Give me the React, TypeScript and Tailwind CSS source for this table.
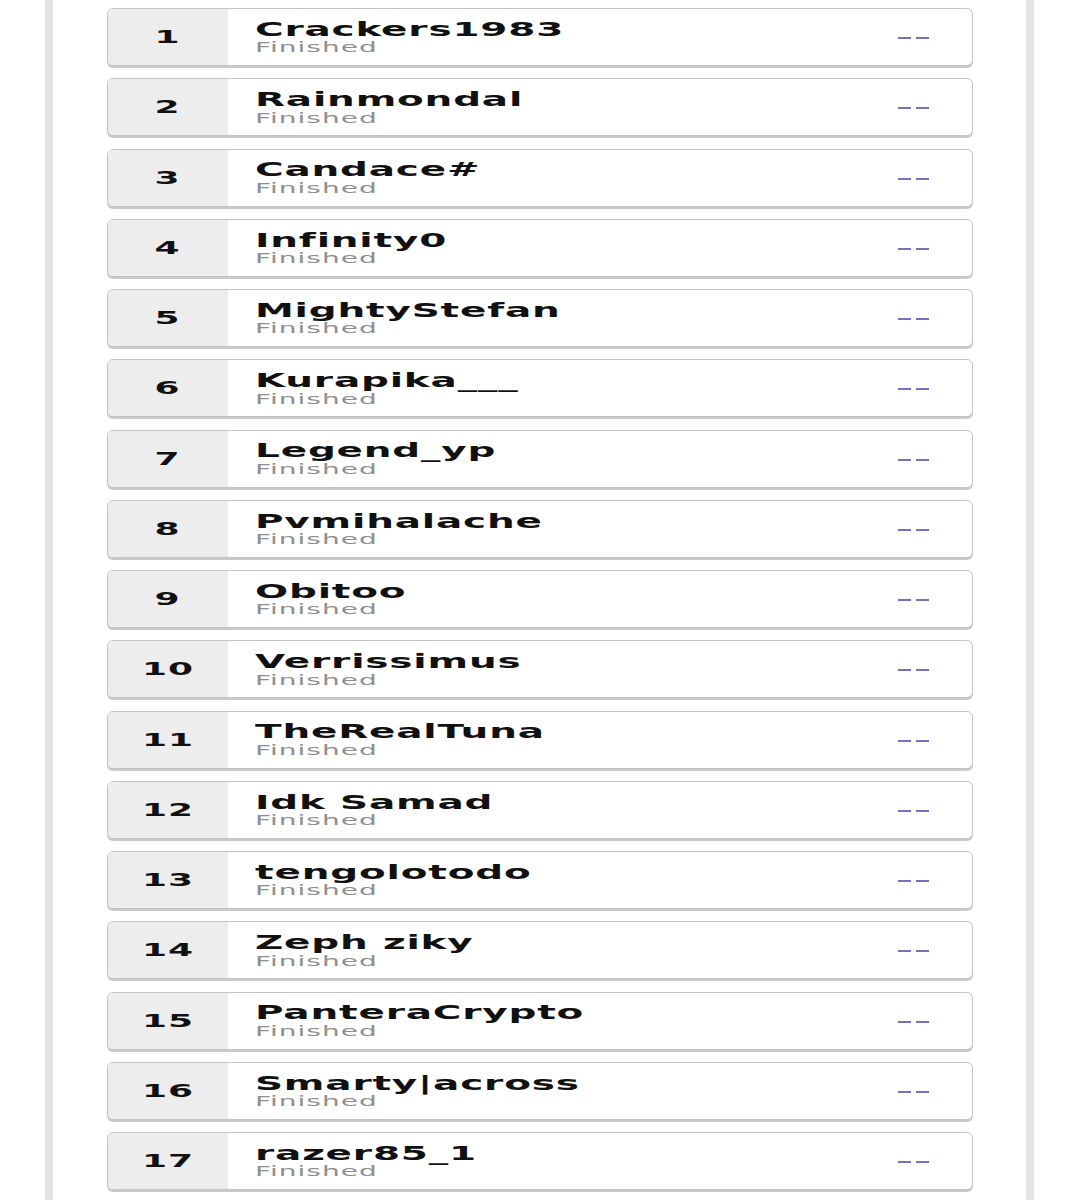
const players = [
  'Crackers1983',
  'Rainmondal',
  'Candace#',
  'Infinity0',
  'MightyStefan',
  'Kurapika___',
  'Legend_yp',
  'Pvmihalache',
  'Obitoo',
  'Verrissimus',
  'TheRealTuna',
  'Idk Samad',
  'tengolotodo',
  'Zeph ziky',
  'PanteraCrypto',
  'Smarty|across',
  'razer85_1',
];

function Row({ rank, name }: { rank: number; name: string }) {
  return (
    <div className="flex h-[58px] shrink-0 overflow-hidden rounded-[6px] border border-[#c4c4c4] bg-white shadow-[0_2px_0_#c9c9c9]">
      {/* Rank */}
      <div className="flex w-[120px] shrink-0 items-center justify-center bg-[#ededed]">
        <span className="inline-block origin-center scale-x-[2] text-[18px] font-bold leading-none tracking-[0.5px] text-[#111]">
          {rank}
        </span>
      </div>

      {/* Player */}
      <div className="flex flex-1 items-center pl-[27px]">
        <div className="flex flex-col">
          <span className="inline-block origin-left scale-x-[2.05] whitespace-pre text-[19px] font-bold leading-none tracking-[0.4px] text-[#111]">
            {name}
          </span>
          <span className="mt-[1.5px] inline-block origin-left scale-x-[2] text-[14px] leading-none tracking-[0.5px] text-[#8f8f8f]">
            Finished
          </span>
        </div>
      </div>

      {/* Score */}
      <div className="mr-[43px] flex items-center pt-[2px]">
        <span className="flex gap-[5px]">
          <span className="block h-[2px] w-[13px] bg-[#7a6fbf]" />
          <span className="block h-[2px] w-[13px] bg-[#7a6fbf]" />
        </span>
      </div>
    </div>
  );
}

export default function App() {
  return (
    <div className="flex h-[1200px] w-full bg-white" style={{ fontFamily: '"DejaVu Sans", sans-serif' }}>
      <div className="w-[45px] shrink-0" />
      <div className="w-[8px] shrink-0 bg-[#e4e4e4]" />
      <div className="flex flex-1 flex-col gap-[12.25px] overflow-hidden pl-[54px] pr-[53px] pt-[8px]">
        {players.map((p, i) => (
          <Row key={p} rank={i + 1} name={p} />
        ))}
      </div>
      <div className="w-[8px] shrink-0 bg-[#e4e4e4]" />
      <div className="w-[32px] shrink-0" />
    </div>
  );
}
